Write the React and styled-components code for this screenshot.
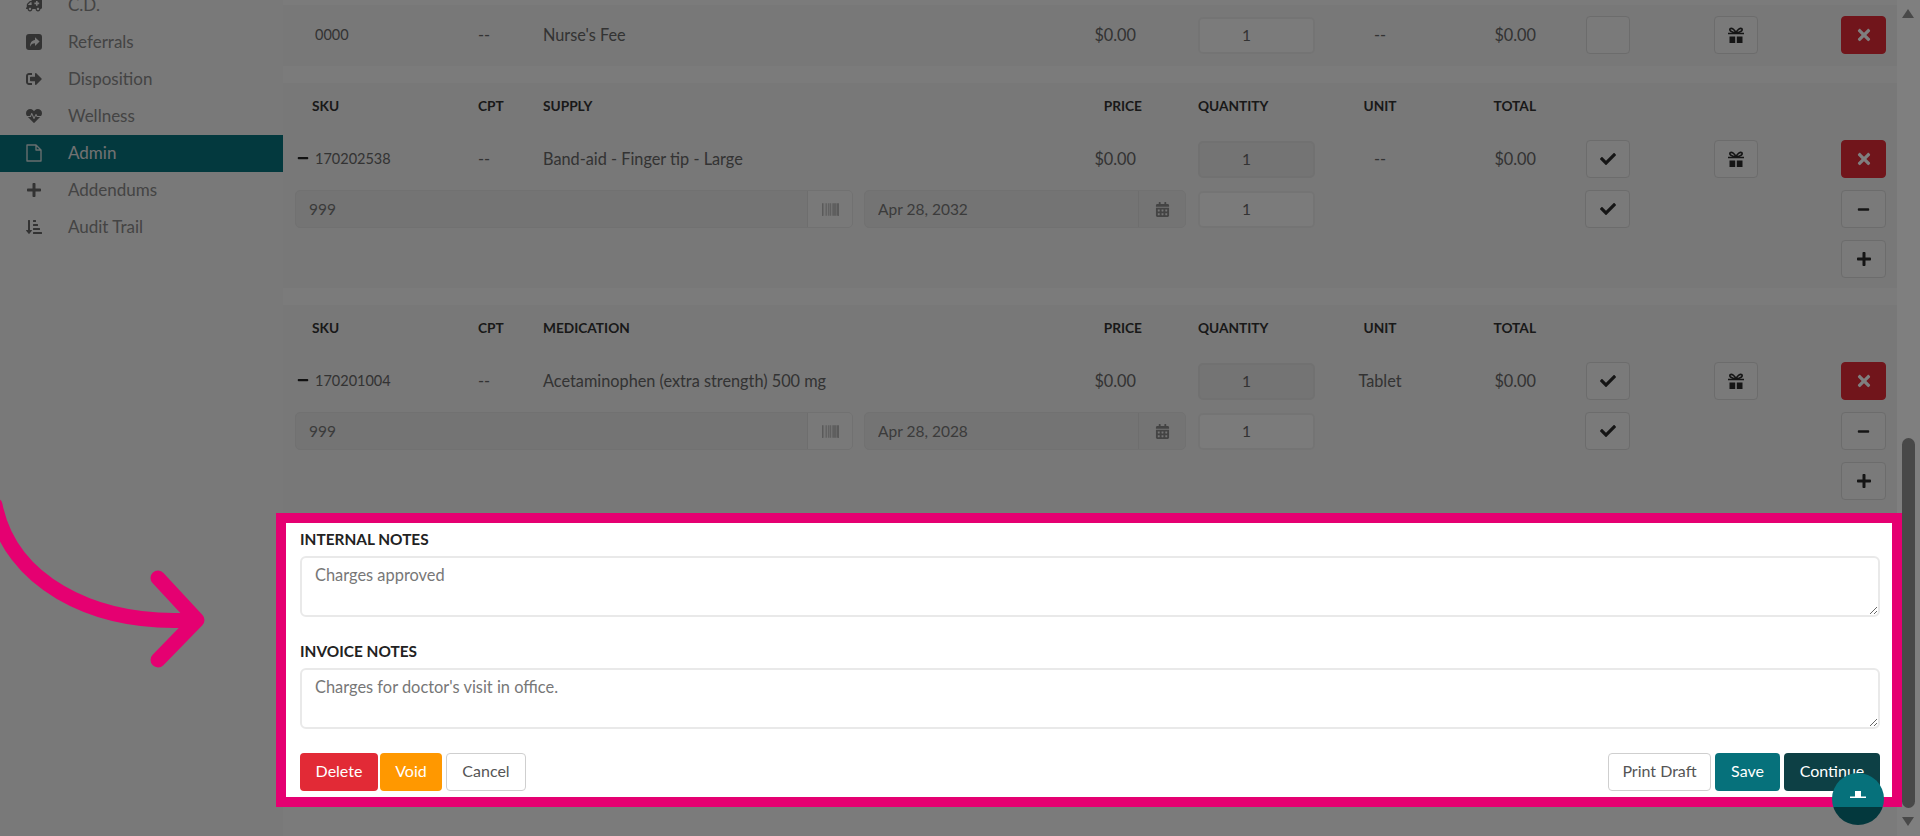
import React from 'react';
import styled, { createGlobalStyle } from 'styled-components';
import {
  FaAmbulance,
  FaBarcode,
  FaCalendarAlt,
  FaCheck,
  FaHeartbeat,
  FaMinus,
  FaPlus,
  FaSignOutAlt,
  FaSortAmountDownAlt,
  FaTimes,
} from 'react-icons/fa';

const GlobalStyle = createGlobalStyle`
  html, body {
    margin: 0;
    padding: 0;
    background: #fff;
    font-family: Lato, "Open Sans", sans-serif;
  }
`;

const Page = styled.div`
  position: relative;
  display: flex;
  width: 1920px;
  height: 836px;
  overflow: hidden;
  background: #fff;
`;

const Sidebar = styled.nav`
  flex: 0 0 283px;
  background: #f2f2f2;
`;

const NavList = styled.div`
  margin-top: -13px;
`;

const NavRow = styled.div`
  display: flex;
  align-items: center;
  box-sizing: border-box;
  height: 37px;
  padding: 0 0 2px 26px;
  gap: 26px;
  font-size: 17px;
  color: ${(p) => (p.$active ? '#e4e4e4' : '#888')};
  background: ${(p) => (p.$active ? '#06727d' : 'transparent')};

  svg {
    flex: 0 0 16px;
    color: ${(p) => (p.$active ? '#cfdcdc' : '#666')};
  }
`;

const AmbulanceIcon = styled(FaAmbulance)`
  transform: scaleX(-1);
`;

const Main = styled.main`
  flex: 0 0 1614px;
  padding-top: 5px;
  background: #f7f7f7;
`;

const Card = styled.section`
  padding: 0 0 ${(p) => p.$bottom}px 12px;
  margin-bottom: ${(p) => (p.$last ? 0 : 17)}px;
  background: #f0f0f0;
`;

const ItemGrid = styled.div`
  display: grid;
  grid-template-columns: 183px 65px 547px 108px 117px 130px 93px 92px 128px 128px;
  grid-template-rows: ${(p) => (p.$head ? '45px' : 'none')};
  grid-auto-rows: 38px;
  row-gap: 12px;
  align-items: center;
  padding-top: ${(p) => p.$top || 0}px;
  font-size: 16.3px;
  color: #666;
`;

const HeadCell = styled.div`
  line-height: 44px;
  font-size: 13.7px;
  font-weight: 700;
  color: #333;
  text-align: ${(p) => p.$align || 'left'};
  padding-left: ${(p) => p.$left || 0}px;
  padding-right: ${(p) => p.$right || 0}px;
`;

const TextCell = styled.div`
  padding-bottom: 2px;
`;

const SkuCell = styled.div`
  display: flex;
  align-items: center;
  gap: 6px;
  padding-left: ${(p) => (p.$dash ? 2 : 20)}px;
  padding-bottom: 2px;
  font-size: 14.5px;

  svg {
    color: #222;
  }
`;

const PriceCell = styled(TextCell)`
  text-align: right;
  padding-right: 62px;
`;

const UnitCell = styled(TextCell)`
  text-align: center;
`;

const TotalCell = styled(TextCell)`
  text-align: right;
  padding-right: 2px;
`;

const QtyInput = styled.input`
  box-sizing: border-box;
  width: 117px;
  height: 37px;
  padding: 0 20px 0 0;
  border: 2px solid ${(p) => (p.disabled ? '#e2e2e2' : '#e9e9e9')};
  border-radius: 5px;
  background: ${(p) => (p.disabled ? '#e8e8e8' : '#f7f7f7')};
  opacity: 1;
  font: 15.5px Lato, sans-serif;
  color: #666;
  text-align: center;
`;

const FieldRow = styled.div`
  grid-column: 1 / span 4;
  display: flex;
  gap: 11px;
`;

const FieldGroup = styled.div`
  box-sizing: border-box;
  display: flex;
  width: ${(p) => p.$width}px;
  height: 38px;
  border: 1.5px solid #e2e2e2;
  border-radius: 5px;
  overflow: hidden;
  background: #e8e8e8;
`;

const FieldInput = styled.input`
  flex: 1;
  min-width: 0;
  padding: 0 0 0 13px;
  border: 0;
  background: transparent;
  font: 15.5px Lato, sans-serif;
  color: #777;
`;

const FieldAddon = styled.div`
  display: flex;
  flex: 0 0 ${(p) => p.$width}px;
  align-items: center;
  justify-content: center;
  border-left: 1px solid #dcdcdc;
  background: ${(p) => p.$bg || '#e8e8e8'};
  color: #9a9a9a;
`;

const IconButton = styled.button`
  box-sizing: border-box;
  display: flex;
  align-items: center;
  justify-content: center;
  justify-self: end;
  width: ${(p) => p.$width || 45}px;
  height: 38px;
  padding: 0;
  border: 1.5px solid ${(p) => (p.$danger ? '#e22a36' : '#d8d8d8')};
  border-radius: 4px;
  background: ${(p) => (p.$danger ? '#e22a36' : '#f4f4f4')};
  color: ${(p) => (p.$danger ? '#fff' : '#2a2a2a')};
`;

const LastColumnButton = styled(IconButton)`
  grid-column: 10;
`;

const NotesPanel = styled.section`
  position: relative;
  box-sizing: border-box;
  margin: 0 -5px 0 -7px;
  padding: 6px 12px 6px 14px;
  border: 10px solid #e50071;
  background: #fff;
`;

const Spotlight = styled.div`
  position: absolute;
  inset: -10px;
  z-index: 3;
  pointer-events: none;
  box-shadow: 0 0 0 3000px rgba(0, 0, 0, 0.5);
`;

const NoteLabel = styled.label`
  display: block;
  height: 20px;
  line-height: 20px;
  margin-bottom: 7px;
  font-size: 15.4px;
  font-weight: 700;
  color: #222;
`;

const NoteArea = styled.textarea`
  display: block;
  box-sizing: border-box;
  width: 100%;
  height: 61px;
  margin-bottom: 24px;
  padding: 7px 13px;
  border: 2px solid #e9e9e9;
  border-radius: 6px;
  outline: 0;
  resize: vertical;
  font: 16.4px Lato, sans-serif;
  color: #777;
`;

const FormActions = styled.div`
  display: flex;
  justify-content: space-between;
`;

const ActionGroup = styled.div`
  display: flex;
  gap: 4px;
`;

const ActionButton = styled.button`
  box-sizing: border-box;
  width: ${(p) => p.$width}px;
  height: 38px;
  margin-right: ${(p) => p.$tight || 0}px;
  padding: 0 0 4px;
  border: ${(p) => (p.$bg ? '0' : '1.5px solid #cfcfcf')};
  border-radius: 4px;
  background: ${(p) => p.$bg || '#fff'};
  color: ${(p) => (p.$bg ? '#fff' : '#555')};
  font: 16px Lato, sans-serif;
`;

const ScrollTrack = styled.div`
  display: flex;
  flex: 0 0 23px;
  flex-direction: column;
  padding-left: 5px;
  background: #fff;
`;

const ScrollArrow = styled.div`
  width: 0;
  height: 0;
  margin-top: ${(p) => p.$top}px;
  border-left: 6.5px solid transparent;
  border-right: 6.5px solid transparent;
  ${(p) => (p.$down ? 'border-top' : 'border-bottom')}: 9px solid #929292;
`;

const ScrollThumb = styled.div`
  width: 13px;
  height: 370px;
  margin-top: 420px;
  border-radius: 7px;
  background: #909090;
`;

const Fab = styled.div`
  position: absolute;
  right: 36px;
  bottom: 11px;
  z-index: 2;
  width: 52px;
  height: 52px;
  border-radius: 50%;
  background: #06717b;
`;

const FabPlus = styled.svg`
  position: absolute;
  top: 18px;
  left: 18px;
`;

const ArrowMark = styled.svg`
  position: absolute;
  top: 490px;
  left: 0;
  z-index: 4;
`;

const GiftIcon = () => (
  <svg width="16" height="17" viewBox="0 0 16 17" fill="currentColor">
    <path
      d="M8 6C7 2.500 3.500 .5 2.300 1.700 1 3 2.800 5.600 8 6zM8 6c1-3.500 4.500-5.500 5.700-4.300C15 3 13.200 5.600 8 6z"
      fill="none"
      stroke="currentColor"
      strokeWidth="1.700"
    />
    <path d="M0 5.800h16v1.400H0zM1.500 9.500h5.700V16H1.500zM8.800 9.500h5.700V16H8.800z" />
  </svg>
);

const ShareIcon = () => (
  <svg width="16" height="16" viewBox="0 0 16 16" fill="currentColor">
    <path
      fillRule="evenodd"
      d="M3 0h10a3 3 0 0 1 3 3v10a3 3 0 0 1-3 3H3a3 3 0 0 1-3-3V3a3 3 0 0 1 3-3zM9 3.200v2.700C5.700 6.200 4 8.700 4 12.800 5 10.300 6.500 9.300 9 9.300V12l4.600-4.400z"
    />
  </svg>
);

const FileIcon = () => (
  <svg width="16" height="18" viewBox="0 0 16 18" fill="none" stroke="currentColor" strokeWidth="1.400" strokeLinejoin="round">
    <path d="M1 1h9l5 5v11H1zM10 1v5h5" />
  </svg>
);

const navItems = [
  { label: 'C.D.', Icon: AmbulanceIcon, size: 18 },
  { label: 'Referrals', Icon: ShareIcon },
  { label: 'Disposition', Icon: FaSignOutAlt },
  { label: 'Wellness', Icon: FaHeartbeat },
  { label: 'Admin', Icon: FileIcon, active: true },
  { label: 'Addendums', Icon: FaPlus },
  { label: 'Audit Trail', Icon: FaSortAmountDownAlt },
];

const lots = [
  {
    kind: 'SUPPLY',
    sku: '170202538',
    name: 'Band-aid - Finger tip - Large',
    unit: '--',
    expires: 'Apr 28, 2032',
  },
  {
    kind: 'MEDICATION',
    sku: '170201004',
    name: 'Acetaminophen (extra strength) 500 mg',
    unit: 'Tablet',
    expires: 'Apr 28, 2028',
  },
];

function HeaderRow({ kind }) {
  return (
    <>
      <HeadCell $left={17}>SKU</HeadCell>
      <HeadCell>CPT</HeadCell>
      <HeadCell>{kind}</HeadCell>
      <HeadCell $align="right" $right={56}>
        PRICE
      </HeadCell>
      <HeadCell>QUANTITY</HeadCell>
      <HeadCell $align="center">UNIT</HeadCell>
      <HeadCell $align="right" $right={2}>
        TOTAL
      </HeadCell>
      <HeadCell />
      <HeadCell />
      <HeadCell />
    </>
  );
}

function LotCard({ item, bottom, last }) {
  return (
    <Card $bottom={bottom} $last={last}>
      <ItemGrid $head>
        <HeaderRow kind={item.kind} />
        <SkuCell $dash>
          <FaMinus size={12} />
          {item.sku}
        </SkuCell>
        <TextCell>--</TextCell>
        <TextCell>{item.name}</TextCell>
        <PriceCell>$0.00</PriceCell>
        <QtyInput disabled defaultValue="1" />
        <UnitCell>{item.unit}</UnitCell>
        <TotalCell>$0.00</TotalCell>
        <IconButton $width={44}>
          <FaCheck size={16} />
        </IconButton>
        <IconButton $width={44}>
          <GiftIcon />
        </IconButton>
        <IconButton $danger>
          <FaTimes size={18} />
        </IconButton>

        <FieldRow>
          <FieldGroup $width={558}>
            <FieldInput readOnly defaultValue="999" />
            <FieldAddon $width={44} $bg="#f3f3f3">
              <FaBarcode size={17} />
            </FieldAddon>
          </FieldGroup>
          <FieldGroup $width={322}>
            <FieldInput readOnly defaultValue={item.expires} />
            <FieldAddon $width={46}>
              <FaCalendarAlt size={15} color="#888" />
            </FieldAddon>
          </FieldGroup>
        </FieldRow>
        <QtyInput defaultValue="1" />
        <div />
        <div />
        <IconButton>
          <FaCheck size={16} />
        </IconButton>
        <div />
        <IconButton>
          <FaMinus size={13} />
        </IconButton>

        <LastColumnButton>
          <FaPlus size={16} />
        </LastColumnButton>
      </ItemGrid>
    </Card>
  );
}

export default function App() {
  return (
    <Page>
      <GlobalStyle />
      <Sidebar>
        <NavList>
          {navItems.map(({ label, Icon, active, size }) => (
            <NavRow key={label} $active={active}>
              <Icon size={size || 16} />
              {label}
            </NavRow>
          ))}
        </NavList>
      </Sidebar>

      <Main>
        <Card $bottom={12}>
          <ItemGrid $top={11}>
            <SkuCell>0000</SkuCell>
            <TextCell>--</TextCell>
            <TextCell>Nurse's Fee</TextCell>
            <PriceCell>$0.00</PriceCell>
            <QtyInput defaultValue="1" />
            <UnitCell>--</UnitCell>
            <TotalCell>$0.00</TotalCell>
            <IconButton $width={44} />
            <IconButton $width={44}>
              <GiftIcon />
            </IconButton>
            <IconButton $danger>
              <FaTimes size={18} />
            </IconButton>
          </ItemGrid>
        </Card>

        <LotCard item={lots[0]} bottom={10} />
        <LotCard item={lots[1]} bottom={13} last />

        <NotesPanel>
          <NoteLabel>INTERNAL NOTES</NoteLabel>
          <NoteArea defaultValue="Charges approved" />
          <NoteLabel>INVOICE NOTES</NoteLabel>
          <NoteArea defaultValue="Charges for doctor's visit in office." />
          <FormActions>
            <ActionGroup>
              <ActionButton $width={78} $bg="#e22a36" $tight={-2}>
                Delete
              </ActionButton>
              <ActionButton $width={62} $bg="#ff9800">
                Void
              </ActionButton>
              <ActionButton $width={80}>Cancel</ActionButton>
            </ActionGroup>
            <ActionGroup>
              <ActionButton $width={103}>Print Draft</ActionButton>
              <ActionButton $width={65} $bg="#06717b">
                Save
              </ActionButton>
              <ActionButton $width={96} $bg="#0d4045">
                Continue
              </ActionButton>
            </ActionGroup>
          </FormActions>
          <Spotlight />
        </NotesPanel>
      </Main>

      <ScrollTrack>
        <ScrollArrow $top={9} />
        <ScrollThumb />
        <ScrollArrow $top={9} $down />
      </ScrollTrack>

      <Fab>
        <FabPlus width="16" height="7" viewBox="0 0 16 7">
          <path d="M5 0h6v5.4h5V7H0V5.4h5z" fill="#fff" />
        </FabPlus>
      </Fab>

      <ArrowMark width="215" height="190" viewBox="0 0 215 190" fill="none">
        <path
          d="M-5 15C10 90 90 135 190 130M158 88L197 130L158 170"
          stroke="#e50071"
          strokeWidth="15"
          strokeLinecap="round"
          strokeLinejoin="round"
        />
      </ArrowMark>
    </Page>
  );
}
